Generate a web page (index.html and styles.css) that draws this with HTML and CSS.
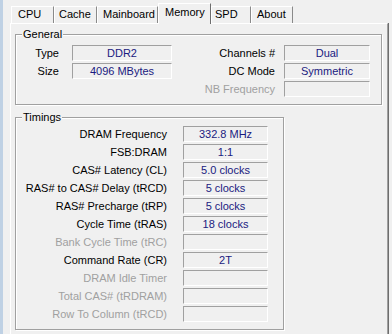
FILE: index.html
```html
<!DOCTYPE html>
<html lang="en">
<head>
    <meta charset="UTF-8">
    <title>CPU-Z - Memory</title>
    <link rel="stylesheet" href="styles.css">
</head>
<body>
    <div class="window">
        <div class="tabs">
            <div class="tab tab-cpu">CPU</div>
            <div class="tab tab-cache">Cache</div>
            <div class="tab tab-mainboard">Mainboard</div>
            <div class="tab tab-memory active">Memory</div>
            <div class="tab tab-spd">SPD</div>
            <div class="tab tab-about">About</div>
        </div>

        <div class="panel">
            <div class="group general">
                <span class="group-title">General</span>

                <span class="label">Type</span>
                <span class="field">DDR2</span>
                <span class="label label-right">Channels #</span>
                <span class="field">Dual</span>

                <span class="label">Size</span>
                <span class="field">4096 MBytes</span>
                <span class="label label-right">DC Mode</span>
                <span class="field">Symmetric</span>

                <span class="label"></span>
                <span class="blank"></span>
                <span class="label label-right disabled">NB Frequency</span>
                <span class="field"></span>
            </div>

            <div class="group timings">
                <span class="group-title">Timings</span>

                <span class="label">DRAM Frequency</span>
                <span class="field">332.8 MHz</span>
                <span class="label">FSB:DRAM</span>
                <span class="field">1:1</span>
                <span class="label">CAS# Latency (CL)</span>
                <span class="field">5.0 clocks</span>
                <span class="label">RAS# to CAS# Delay (tRCD)</span>
                <span class="field">5 clocks</span>
                <span class="label">RAS# Precharge (tRP)</span>
                <span class="field">5 clocks</span>
                <span class="label">Cycle Time (tRAS)</span>
                <span class="field">18 clocks</span>
                <span class="label disabled">Bank Cycle Time (tRC)</span>
                <span class="field"></span>
                <span class="label">Command Rate (CR)</span>
                <span class="field">2T</span>
                <span class="label disabled">DRAM Idle Timer</span>
                <span class="field"></span>
                <span class="label disabled">Total CAS# (tRDRAM)</span>
                <span class="field"></span>
                <span class="label disabled">Row To Column (tRCD)</span>
                <span class="field"></span>
            </div>
        </div>
    </div>
</body>
</html>
```

FILE: styles.css
```css
html, body {
    margin: 0;
    padding: 0;
}
body {
    background-color: #f0f0f0;
    font-family: "Liberation Sans", Arial, sans-serif;
    font-size: 11px;
    color: #000;
    overflow: hidden;
}
.window {
    width: 392px;
    height: 334px;
    box-sizing: border-box;
    border-left: 3px solid #bfd1e4;
    padding-left: 7px;
    display: flex;
    flex-direction: column;
    overflow: hidden;
}

/* tab strip */
.tabs {
    display: flex;
    align-items: flex-end;
    height: 23px;
    padding-left: 1px;
    flex-shrink: 0;
}
.tab {
    box-sizing: border-box;
    height: 17px;
    line-height: 15px;
    padding-left: 6px;
    border-top: 1px solid #fff;
    border-left: 1px solid #fff;
    border-right: 1px solid #8a8a8a;
    white-space: nowrap;
}
.tab-cpu { width: 43px; }
.tab-cache { width: 43px; padding-left: 4px; }
.tab-mainboard { width: 61px; padding-left: 5px; }
.tab-memory { width: 53px; }
.tab-spd { width: 40px; padding-left: 3px; }
.tab-about { width: 42px; padding-left: 5px; }
.tab.active {
    height: 21px;
    line-height: 17px;
    margin-bottom: -1px;
    padding-left: 6px;
    background-color: #f0f0f0;
    position: relative;
    z-index: 1;
    border-right-color: #6e6e6e;
}

/* page body */
.panel {
    flex: 1;
    width: 378px;
    box-sizing: border-box;
    border-top: 1px solid #fff;
    border-left: 1px solid #fff;
    border-right: 1px solid #a0a0a0;
    box-shadow: 1px 0 0 #6e6e6e;
    padding: 10px 0 0 4px;
}

.group {
    position: relative;
    box-sizing: border-box;
    border: 1px solid #a0a0a0;
    box-shadow: inset 1px 1px 0 #fff, 1px 1px 0 #fff;
    display: grid;
    align-items: center;
}
.group-title {
    position: absolute;
    top: -7px;
    left: 6px;
    padding: 0 1px;
    line-height: 13px;
    background-color: #f0f0f0;
}

.general {
    width: 367px;
    height: 71px;
    padding: 10px 0 7px 0;
    grid-template-columns: 56px 100px 112px 86px;
    grid-auto-rows: 16px;
    row-gap: 2px;
}
.general .label {
    padding-right: 13px;
}
.general .label-right {
    padding-right: 9px;
}

.timings {
    width: 269px;
    height: 213px;
    margin-top: 12px;
    padding: 8px 0 7px 0;
    grid-template-columns: 167px 85px;
    grid-auto-rows: 16px;
    row-gap: 2px;
}
.timings .label {
    padding-right: 16px;
}

.label {
    text-align: right;
    white-space: nowrap;
    line-height: 16px;
}
.label.disabled {
    color: #a0a0a0;
}
.field {
    box-sizing: border-box;
    height: 16px;
    border-top: 1px solid #a0a0a0;
    border-left: 1px solid #a0a0a0;
    border-right: 1px solid #fff;
    border-bottom: 1px solid #fff;
    text-align: center;
    line-height: 14px;
    color: #1a1a80;
    white-space: nowrap;
}
```
